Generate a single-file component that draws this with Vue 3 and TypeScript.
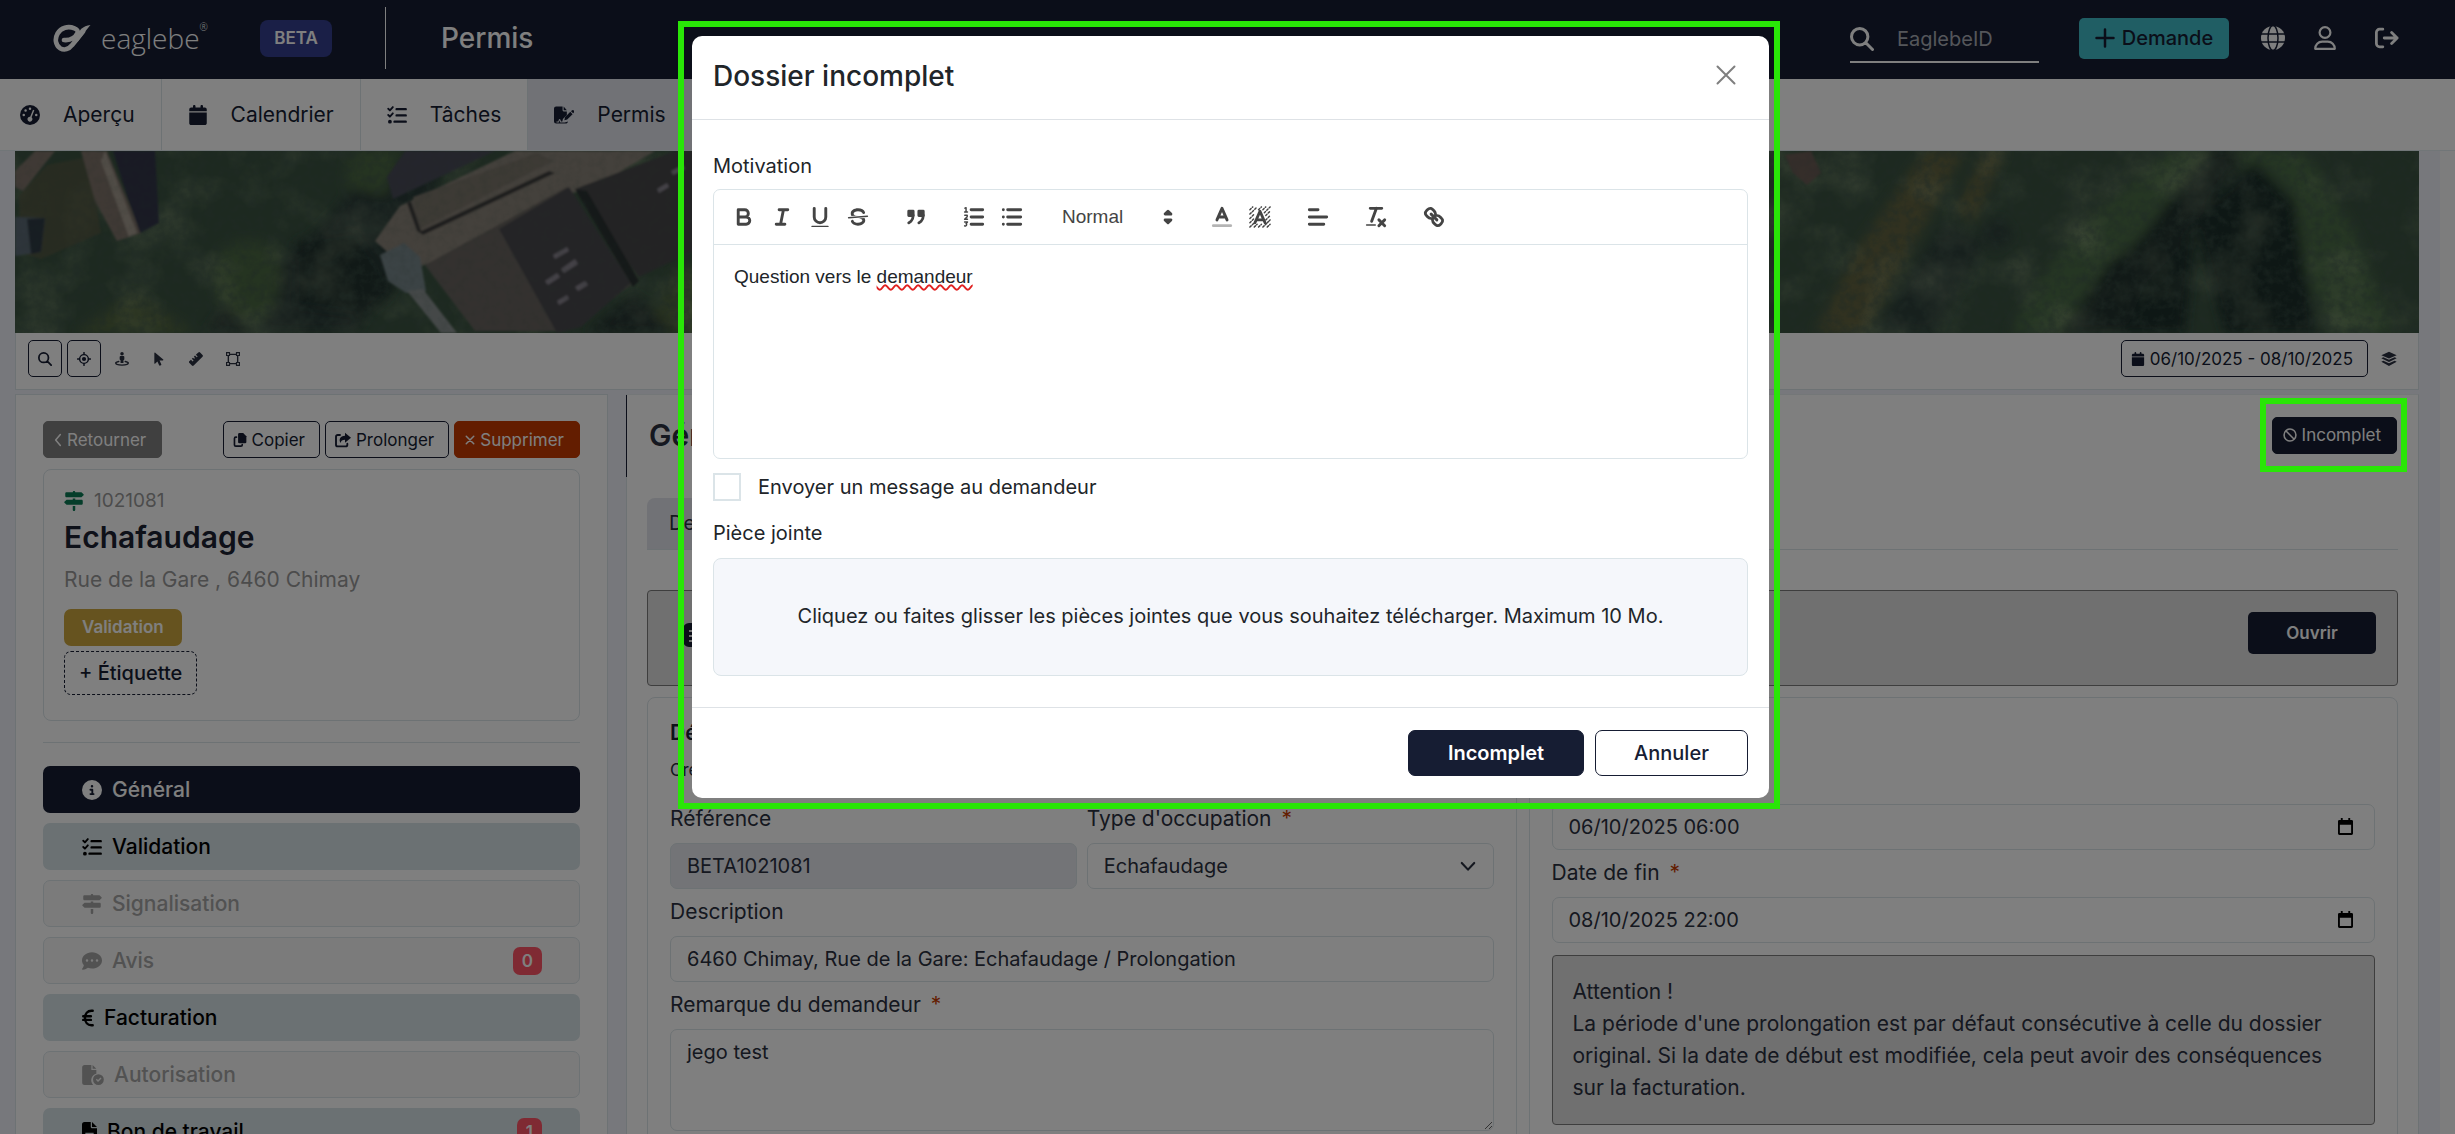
<script setup lang="ts">
import { ref } from 'vue'

interface NavItem { icon: string; label: string; active?: boolean }
interface MenuItem { icon: string; label: string; state: 'current' | 'open' | 'locked'; count?: number }

const nav: NavItem[] = [
  { icon: 'gauge', label: 'Aperçu' },
  { icon: 'calendar', label: 'Calendrier' },
  { icon: 'tasks', label: 'Tâches' },
  { icon: 'sign-file', label: 'Permis', active: true },
]

const menu: MenuItem[] = [
  { icon: 'info', label: 'Général', state: 'current' },
  { icon: 'tasks', label: 'Validation', state: 'open' },
  { icon: 'signpost', label: 'Signalisation', state: 'locked' },
  { icon: 'comment', label: 'Avis', state: 'locked', count: 0 },
  { icon: 'euro', label: 'Facturation', state: 'open' },
  { icon: 'file-check', label: 'Autorisation', state: 'locked' },
  { icon: 'file', label: 'Bon de travail', state: 'open', count: 1 },
]

const mapTools = [
  { icon: 'search', label: 'Rechercher', boxed: true },
  { icon: 'target', label: 'Localiser', boxed: true },
  { icon: 'street', label: 'Vue de rue', boxed: false },
  { icon: 'cursor', label: 'Sélectionner', boxed: false },
  { icon: 'ruler', label: 'Mesurer', boxed: false },
  { icon: 'polygon', label: 'Dessiner', boxed: false },
]

const editorGroups: { icon: string; label: string }[][] = [
  [
    { icon: 'q-bold', label: 'Gras' },
    { icon: 'q-italic', label: 'Italique' },
    { icon: 'q-underline', label: 'Souligné' },
    { icon: 'q-strike', label: 'Barré' },
  ],
  [{ icon: 'q-quote', label: 'Citation' }],
  [
    { icon: 'q-ordered', label: 'Liste numérotée' },
    { icon: 'q-bullet', label: 'Liste à puces' },
  ],
]
const editorGroupsEnd: { icon: string; label: string }[][] = [
  [
    { icon: 'q-color', label: 'Couleur' },
    { icon: 'q-background', label: 'Surlignage' },
  ],
  [{ icon: 'q-align', label: 'Alignement' }],
  [{ icon: 'q-clean', label: 'Effacer la mise en forme' }],
  [{ icon: 'q-link', label: 'Lien' }],
]

const search = ref('')
const reference = ref('BETA1021081')
const occupation = ref('Echafaudage')
const description = ref('6460 Chimay, Rue de la Gare: Echafaudage / Prolongation')
const remark = ref('jego test')
const start = ref('06/10/2025 06:00')
const end = ref('08/10/2025 22:00')
const notify = ref(false)
</script>

<template>
  <svg class="sprite" aria-hidden="true">
    <symbol id="gauge" viewBox="0 0 24 24">
      <path fill-rule="evenodd" fill="currentColor" d="M12 0a12 12 0 1 0 0 24a12 12 0 1 0 0-24zM12 3a1.500 1.500 0 1 1 0 3a1.500 1.500 0 1 1 0-3zM6.700 5.200a1.500 1.500 0 1 1 0 3a1.500 1.500 0 1 1 0-3zM4.500 10.500a1.500 1.500 0 1 1 0 3a1.500 1.500 0 1 1 0-3zM19.500 10.500a1.500 1.500 0 1 1 0 3a1.500 1.500 0 1 1 0-3zM15.600 5.600l1.600.700-3.300 8.400a3 3 0 1 1-1.700-.700z" />
    </symbol>
    <symbol id="calendar" viewBox="0 0 448 512">
      <path fill="currentColor" d="M96 32V64H48C21.500 64 0 85.500 0 112v48H448V112c0-26.500-21.500-48-48-48H352V32c0-17.700-14.300-32-32-32s-32 14.300-32 32V64H160V32c0-17.700-14.300-32-32-32S96 14.300 96 32zM448 192H0V464c0 26.500 21.500 48 48 48H400c26.500 0 48-21.500 48-48V192z" />
    </symbol>
    <symbol id="tasks" viewBox="0 0 24 24">
      <g fill="none" stroke="currentColor" stroke-linecap="round" stroke-linejoin="round">
        <path stroke-width="2.200" d="M1.500 4.500l2 2L7 2.500M1.500 12l2 2L7 10" />
        <path stroke-width="2.800" d="M11.500 5h11M11.500 12.500h11M9 20h13.500" />
      </g>
      <circle cx="3.500" cy="20" r="2.300" fill="currentColor" />
    </symbol>
    <symbol id="sign-file" viewBox="0 0 28 24">
      <path fill="currentColor" d="M3 0h9v5.500A1.500 1.500 0 0 0 13.500 7H18v5l-5.500 5.600-.9 3.400H10l-1-2.500c-.5-1.100-2-1-2.300 0L6 21H3.500v1.400h3.200l1-3 1.100 3H15l4.500-1.200V21a3 3 0 0 1-1.500 2.600c-.4.200-.9.400-1.500.4H3a3 3 0 0 1-3-3V3a3 3 0 0 1 3-3zM13.500 0L18 5.500h-4.500zM22.800 7.600l3.200 3.200-7.500 7.500-4 1 .9-4.100zM23.800 6.600l1-1a2.100 2.100 0 0 1 3 3l-1 1z" />
    </symbol>
    <symbol id="search" viewBox="0 0 24 24">
      <path fill="none" stroke="currentColor" stroke-width="3" stroke-linecap="round" d="M9.700 1.500a8.200 8.200 0 1 0 0 16.400a8.200 8.200 0 1 0 0-16.400M15.800 15.800l6.700 6.700" />
    </symbol>
    <symbol id="plus" viewBox="0 0 20 20">
      <path fill="none" stroke="currentColor" stroke-width="2.500" stroke-linecap="round" d="M10 1.500v17M1.500 10h17" />
    </symbol>
    <symbol id="globe" viewBox="0 0 24 24">
      <circle cx="12" cy="12" r="12" fill="currentColor" />
      <g fill="none" stroke="#161d33" stroke-width="1.500">
        <path d="M0 8h24M0 16h24" />
        <ellipse cx="12" cy="12" rx="5" ry="12.500" />
      </g>
    </symbol>
    <symbol id="user" viewBox="0 0 22 24">
      <g fill="none" stroke="currentColor" stroke-width="2.200" stroke-linejoin="round">
        <circle cx="11" cy="6.500" r="5.400" />
        <path d="M1.200 22.800c0-4 3-7.100 7-7.100h5.600c4 0 7 3.100 7 7.100z" />
      </g>
    </symbol>
    <symbol id="logout" viewBox="0 0 26 22">
      <path fill="none" stroke="currentColor" stroke-width="3" stroke-linecap="round" stroke-linejoin="round" d="M8.500 1.500H5A3.500 3.500 0 0 0 1.500 5v12A3.500 3.500 0 0 0 5 20.500h3.500M10 11h14M18 5l6 6-6 6" />
    </symbol>
    <symbol id="target" viewBox="0 0 24 24">
      <g fill="none" stroke="currentColor" stroke-width="2.500" stroke-linecap="round">
        <circle cx="12" cy="12" r="7.500" />
        <path d="M12 1v3M12 20v3M1 12h3M20 12h3" />
      </g>
      <circle cx="12" cy="12" r="3.600" fill="currentColor" />
    </symbol>
    <symbol id="street" viewBox="0 0 24 24">
      <circle cx="12" cy="3" r="3" fill="currentColor" />
      <path fill="currentColor" d="M9.500 7h5A1.500 1.500 0 0 1 16 8.500V13l-1.500 1v5h-5v-5L8 13V8.500A1.500 1.500 0 0 1 9.500 7z" />
      <path fill="none" stroke="currentColor" stroke-width="2.500" stroke-linecap="round" d="M6.500 16.200C3.500 16.800 1.300 17.800 1.300 19c0 2 4.800 3.500 10.700 3.500S22.700 21 22.700 19c0-1.200-2.200-2.200-5.200-2.800" />
    </symbol>
    <symbol id="cursor" viewBox="0 0 18 24">
      <path fill="currentColor" d="M1 1.800v17.400c0 .9 1 1.300 1.600.7l3.700-3.800 2.900 6.500c.3.700 1.200 1 2 .7l1-.5c.7-.3 1-1.200.7-1.900L10 14.500h5.600c.9 0 1.300-1 .7-1.600L2.600 1.100C2 .5 1 .9 1 1.800z" />
    </symbol>
    <symbol id="ruler" viewBox="0 0 24 24">
      <path fill="currentColor" d="M1 15.500l2.300-2.300 3 3 1.500-1.500-3-3 2-2 2 2 1.500-1.500-2-2 2-2 3 3 1.500-1.500-3-3L14 2.500 16 .8a2.200 2.200 0 0 1 3 0L23.200 5a2.200 2.200 0 0 1 0 3L8 23.200a2.200 2.200 0 0 1-3 0L.8 19a2.200 2.200 0 0 1 .2-3.500z" />
    </symbol>
    <symbol id="polygon" viewBox="0 0 24 24">
      <g fill="none" stroke="currentColor" stroke-width="2.400">
        <path d="M4 4h16v16H4z" />
        <path fill="#fff" stroke-width="2" d="M1 1h5v5H1zM18 1h5v5h-5zM1 18h5v5H1zM18 18h5v5h-5z" />
      </g>
    </symbol>
    <symbol id="layers" viewBox="0 0 24 22">
      <path fill="currentColor" d="M12 0l11.500 5.200L12 10.400.5 5.200zM3.500 8.200L12 12l8.500-3.800 3 1.800L12 15.400.5 10zM3.500 13.600L12 17.500l8.500-3.900 3 1.600L12 21.500.5 15.200z" />
    </symbol>
    <symbol id="chevron-left" viewBox="0 0 10 18">
      <path fill="none" stroke="currentColor" stroke-width="2" stroke-linecap="round" stroke-linejoin="round" d="M8 2L2 9l6 7" />
    </symbol>
    <symbol id="chevron-down" viewBox="0 0 18 12">
      <path fill="none" stroke="currentColor" stroke-width="2.400" stroke-linecap="round" stroke-linejoin="round" d="M2 2l7 7.500L16 2" />
    </symbol>
    <symbol id="copy" viewBox="0 0 20 22">
      <path fill="currentColor" d="M9 0h6l5 5v9a2 2 0 0 1-2 2H9a2 2 0 0 1-2-2V2a2 2 0 0 1 2-2z" />
      <path fill="none" stroke="currentColor" stroke-width="2.600" stroke-linecap="round" stroke-linejoin="round" d="M4.500 6.500H3.300a2 2 0 0 0-2 2v10.200a2 2 0 0 0 2 2h8.200a2 2 0 0 0 2-2v-.5" />
    </symbol>
    <symbol id="share" viewBox="0 0 24 22">
      <path fill="none" stroke="currentColor" stroke-width="2.800" stroke-linecap="round" stroke-linejoin="round" d="M7.500 3.500H4A2.500 2.500 0 0 0 1.500 6v12A2.500 2.500 0 0 0 4 20.500h12a2.500 2.500 0 0 0 2.500-2.500v-1.500" />
      <path fill="currentColor" d="M15 0l9 7.500L15 15v-4.500c-4 0-6 1-6.500 5C5 11 7.500 4.800 15 4.600z" />
    </symbol>
    <symbol id="cross" viewBox="0 0 12 12">
      <path fill="none" stroke="currentColor" stroke-width="1.800" stroke-linecap="round" d="M1.500 1.500l9 9M10.500 1.500l-9 9" />
    </symbol>
    <symbol id="close" viewBox="0 0 20 20">
      <path fill="none" stroke="currentColor" stroke-width="2" stroke-linecap="round" d="M1.500 1.500l17 17M18.500 1.500l-17 17" />
    </symbol>
    <symbol id="signpost" viewBox="0 0 512 512">
      <path fill="currentColor" d="M224 32H64C46.300 32 32 46.300 32 64v64c0 17.700 14.300 32 32 32H441.400c4.200 0 8.300-1.700 11.300-4.700l48-48c6.200-6.200 6.200-16.400 0-22.600l-48-48c-3-3-7.100-4.700-11.300-4.700H288c0-17.700-14.300-32-32-32s-32 14.300-32 32zM480 256c0-17.700-14.300-32-32-32H288V192H224v32H70.600c-4.200 0-8.300 1.700-11.300 4.700l-48 48c-6.200 6.200-6.200 16.400 0 22.600l48 48c3 3 7.100 4.700 11.300 4.700H448c17.700 0 32-14.300 32-32V256zM288 480V384H224v96c0 17.700 14.300 32 32 32s32-14.300 32-32z" />
    </symbol>
    <symbol id="info" viewBox="0 0 512 512">
      <path fill="currentColor" d="M256 512A256 256 0 1 0 256 0a256 256 0 1 0 0 512zM216 336h24V272H216c-13.300 0-24-10.700-24-24s10.700-24 24-24h48c13.300 0 24 10.700 24 24v88h8c13.300 0 24 10.700 24 24s-10.700 24-24 24H216c-13.300 0-24-10.700-24-24s10.700-24 24-24zm40-208a32 32 0 1 1 0 64 32 32 0 1 1 0-64z" />
    </symbol>
    <symbol id="comment" viewBox="0 0 512 512">
      <path fill="currentColor" d="M256 448c141.400 0 256-93.100 256-208S397.400 32 256 32S0 125.100 0 240c0 45.100 17.700 86.800 47.700 120.900c-1.900 24.500-11.400 46.300-21.400 62.900c-5.500 9.200-11.100 16.600-15.200 21.600c-2.100 2.500-3.700 4.400-4.900 5.700c-4.600 4.600-7.500 12.800-5 18.800c2.500 6 8.300 9.900 14.800 9.900c28.700 0 57.600-8.900 81.600-19.300c22.900-10 42.400-21.900 54.300-30.600c31.800 11.500 67 17.900 104.100 17.900zM128 208a32 32 0 1 1 0 64 32 32 0 1 1 0-64zm128 0a32 32 0 1 1 0 64 32 32 0 1 1 0-64zm96 32a32 32 0 1 1 64 0 32 32 0 1 1-64 0z" />
    </symbol>
    <symbol id="euro" viewBox="0 0 14 22">
      <path fill="none" stroke="currentColor" stroke-width="2.800" stroke-linecap="round" d="M12.500 2.500h-1.500C6.500 2.500 3.500 6 3.500 11s3 8.500 7.500 8.500h1.500M1.400 9h9M1.400 13.200h9" />
    </symbol>
    <symbol id="file-check" viewBox="0 0 26 24">
      <path fill="currentColor" d="M3 0h8v6h6v4.500a8 8 0 0 0-4.500 12.700c.2.300.4.500.6.800H3a3 3 0 0 1-3-3V3a3 3 0 0 1 3-3zM12.500 0L17 4.600h-4.500z" />
      <path fill="currentColor" fill-rule="evenodd" d="M19.500 11a6.500 6.500 0 1 0 0 13a6.500 6.500 0 1 0 0-13zM22 15l1.200 1.200-4.200 4.200-2.600-2.600 1.200-1.200 1.400 1.400z" />
    </symbol>
    <symbol id="file" viewBox="0 0 18 24">
      <path fill="currentColor" fill-rule="evenodd" d="M3 0h7.500v6A1.500 1.500 0 0 0 12 7.500h6V21a3 3 0 0 1-3 3H3a3 3 0 0 1-3-3V3a3 3 0 0 1 3-3zM12 0l6 6h-6zM4 13v6h10v-6z" />
    </symbol>
    <symbol id="ban" viewBox="0 0 20 20">
      <path fill="none" stroke="currentColor" stroke-width="2.200" d="M10 1.500a8.500 8.500 0 1 0 0 17a8.500 8.500 0 1 0 0-17M4 4l12 12" />
    </symbol>
    <symbol id="date" viewBox="0 0 16 18">
      <path fill="currentColor" fill-rule="evenodd" d="M3 0h2v2h6V0h2v2h1.500A1.500 1.500 0 0 1 16 3.500v13a1.500 1.500 0 0 1-1.500 1.500h-13A1.500 1.500 0 0 1 0 16.500v-13A1.500 1.500 0 0 1 1.500 2H3zM2 7v9h12V7z" />
    </symbol>
    <symbol id="note" viewBox="0 0 24 24">
      <path fill="currentColor" fill-rule="evenodd" d="M6 0h12a6 6 0 0 1 6 6v12a6 6 0 0 1-6 6H6a6 6 0 0 1-6-6V6a6 6 0 0 1 6-6zM6 7v2h12V7zM6 12v2h8v-2zM6 17v2h12v-2z" />
    </symbol>
    <symbol id="q-bold" viewBox="0 0 18 18">
      <path class="qs" d="M5,4H9.500A2.500,2.500,0,0,1,9.500,9H5ZM5,9h5.500A2.500,2.500,0,0,1,10.500,14H5Z" />
    </symbol>
    <symbol id="q-italic" viewBox="0 0 18 18"><path class="qs" d="M7,4h6M5,14h6M8,14L10,4" /></symbol>
    <symbol id="q-underline" viewBox="0 0 18 18">
      <path class="qs" d="M5,3V9a4,4,0,0,0,8,0V3" />
      <rect fill="currentColor" x="3" y="15" width="12" height="1" rx="0.500" />
    </symbol>
    <symbol id="q-strike" viewBox="0 0 18 18">
      <path class="qt" d="M15.500,8.500L2.500,9.500" />
      <path fill="currentColor" d="M9.007,8C6.542,7.791,6,7.519,6,6.500,6,5.792,7.283,5,9,5c1.571,0,2.765.679,2.969,1.309a1,1,0,0,0,1.900-.617C13.356,4.106,11.354,3,9,3,6.200,3,4,4.538,4,6.500a3.200,3.200,0,0,0,.5,1.843ZM8.984,10C11.457,10.208,12,10.479,12,11.500c0,0.708-1.283,1.500-3,1.500-1.571,0-2.765-.679-2.969-1.309a1,1,0,1,0-1.900.617C4.644,13.894,6.646,15,9,15c2.800,0,5-1.538,5-3.500a3.200,3.200,0,0,0-.5-1.843Z" />
    </symbol>
    <symbol id="q-quote" viewBox="0 0 18 18">
      <path class="qs solid" d="M4,5h3v3H4ZM11,5h3v3h-3Z" />
      <path class="qs" d="M7,8c0,4.031-3,5-3,5M14,8c0,4.031-3,5-3,5" />
    </symbol>
    <symbol id="q-ordered" viewBox="0 0 18 18">
      <path class="qs" d="M7,4h8M7,9h8M7,14h8" />
      <path class="qt" d="M2.500,5.500h2M3.500,5.500v-3L2.700,2.900M2.600,7.800h1.700l0,1L2.500,10.500h2M2.500,12.500h2l-1,1.100a0.900,0.900,0,1,1-1,1.500" />
    </symbol>
    <symbol id="q-bullet" viewBox="0 0 18 18"><path class="qs" d="M6,4h9M6,9h9M6,14h9M3,4h0M3,9h0M3,14h0" /></symbol>
    <symbol id="q-color" viewBox="0 0 18 18">
      <path class="qs" opacity="0.400" d="M3,15h12" />
      <path class="qs" d="M5.500,11L9,3l3.500,8M11.600,9H6.400" />
    </symbol>
    <symbol id="q-background" viewBox="0 0 18 18">
      <path class="qt" stroke-dasharray="1.200 1.200" d="M2,4l2-2M2,7l5-5M2,10l3-3M2,13l3-3M2,16l4-4M8,4l2-2M11,4l2-2M12,6l4-4M13,8l3-3M13,11l3-3M14,13l2-2M5,16l2-2M8,16l2-2M11,16l5-5M14,16l2-2" />
      <path class="qs" d="M5.500,13L9,5l3.500,8M11.600,11H6.400" />
    </symbol>
    <symbol id="q-align" viewBox="0 0 18 18"><path class="qs" d="M3,9h12M3,14h10M3,4h6" /></symbol>
    <symbol id="q-clean" viewBox="0 0 18 18">
      <path class="qs" d="M5,3h8M6,12L9.300,3M11,11l4,4M15,11l-4,4" />
      <rect fill="currentColor" x="2" y="14" width="7" height="1" rx="0.500" />
    </symbol>
    <symbol id="q-link" viewBox="0 0 18 18">
      <path class="qs" d="M7,7l4,4M8.900,4.577a3.476,3.476,0,0,1,.36,4.679A3.476,3.476,0,0,1,4.577,8.900C3.185,7.500,2.035,6.400,4.217,4.217S7.500,3.185,8.900,4.577ZM13.423,9.100a3.476,3.476,0,0,0-4.679-.36,3.476,3.476,0,0,0,.36,4.679c1.392,1.392,2.500,2.542,4.679.36S14.815,10.500,13.423,9.100Z" />
    </symbol>
  </svg>

  <div class="app">
    <header class="top">
      <a class="logo" href="#" aria-label="eaglebe">
        <svg class="mark" viewBox="0 0 38 28">
          <path fill="none" stroke="currentColor" stroke-width="4.600" stroke-linejoin="round" stroke-linecap="round" d="M11 16c6 .5 11-2 13.500-7 .8-2-.5-3.800-3-4.700C15 1.800 8 3.500 4.600 9.500 1.500 15 2.500 21 7 24.200c4.500 2.500 9 1 12-3L30 7.500" />
          <path fill="currentColor" d="M28 5c3-2.500 5.500-3.500 9.500-4-3.500 4-7 9-13 17l-2-4z" />
        </svg>
        <span>eaglebe</span><sup>®</sup>
      </a>
      <span class="beta">BETA</span>
      <h1>Permis</h1>
      <label class="find">
        <svg class="i24"><use href="#search" /></svg>
        <input v-model="search" type="text" placeholder="EaglebeID" aria-label="EaglebeID" />
      </label>
      <button class="ask" type="button"><svg class="i20"><use href="#plus" /></svg>Demande</button>
      <button class="plain" type="button" aria-label="Langue"><svg class="i24"><use href="#globe" /></svg></button>
      <button class="plain" type="button" aria-label="Profil"><svg class="i24"><use href="#user" /></svg></button>
      <button class="plain out" type="button" aria-label="Déconnexion"><svg class="i24"><use href="#logout" /></svg></button>
    </header>

    <nav class="tabs">
      <a v-for="n in nav" :key="n.label" href="#" :class="{ active: n.active }">
        <svg class="i20"><use :href="'#' + n.icon" /></svg>{{ n.label }}
      </a>
    </nav>

    <div class="body">
      <main>
        <svg class="map" viewBox="0 0 2404 182" preserveAspectRatio="xMidYMid slice" role="img" aria-label="Vue aérienne">
          <defs>
            <filter id="grain" x="0" y="0" width="100%" height="100%">
              <feTurbulence type="fractalNoise" baseFrequency="0.120" numOctaves="4" seed="8" />
              <feColorMatrix values="0 0 0 0 0.050  0 0 0 0 0.090  0 0 0 0 0.070  1.800 0 0 0 -0.700" />
            </filter>
            <filter id="light" x="0" y="0" width="100%" height="100%">
              <feTurbulence type="fractalNoise" baseFrequency="0.020" numOctaves="5" seed="3" />
              <feColorMatrix values="0 0 0 0 0.420  0 0 0 0 0.500  0 0 0 0 0.300  0 1.800 0 0 -0.800" />
            </filter>
            <filter id="soft"><feGaussianBlur stdDeviation="6" /></filter>
            <filter id="edge"><feGaussianBlur stdDeviation="0.800" /></filter>
          </defs>
          <rect width="2404" height="182" fill="#3b5341" />
          <g filter="url(#soft)">
            <path fill="#2a3a38" d="M250 182C230 120 300 90 320 60L370 0h60l-20 70-20 50-30 30-20 32z" />
            <path fill="#20302f" d="M280 90l60-10 40 60-30 25-70-10z" />
            <path fill="#4c6842" d="M205 100c30-20 60-10 60 20s-10 50-30 50-50-30-30-70zM335 0h55l-20 45-40-10z" />
            <path fill="#52663f" d="M60 182l60-40 60 40zM630 182l30-60 60-20v80z" />
            <path fill="#263633" d="M190 182l20-30 30 30zM570 182l50-40 40 40z" />
            <path fill="#626440" d="M1800 182l40-80 70-102h40l-50 90-50 92zM1940 60l30-60h20l-30 70z" />
            <path fill="#2e403a" d="M1860 182l30-50 40-60 40 20-50 90zM1965 80l20-15 15 20-20 15z" />
            <path fill="#22322f" d="M1990 182l110-130 60-52h70l-60 90-60 92z" />
            <path fill="#4c6c46" d="M1995 182c40-80 80-120 160-182h40c-50 50-60 90-100 110l-50 72zM2220 0h70l50 80 40 102h-60l-30-60z" />
            <path fill="#1e2d2c" d="M2180 70l60-60 40 40 20 132h-90zM2110 182l20-50 50-50-10 100z" />
          </g>
          <rect width="2404" height="182" filter="url(#light)" opacity="0.400" />
          <rect width="2404" height="182" filter="url(#grain)" opacity="0.550" />
          <g filter="url(#edge)">
            <path fill="#5a5a44" d="M4 45L32 14l42-8 12 76-60 26-20-6z" opacity="0.700" />
            <path fill="#7f736a" d="M20 0h20l-32 40-8-4v-16zM66 0h26l34 82-24 8-22-40z" />
            <path fill="#a39a8e" d="M90 0l4 10 28 72-8 4L86 10z" />
            <path fill="#303648" d="M98 0h42l4 72-19 10-12-34z" />
            <path fill="#5c6a76" d="M0 66l30 1-4 34-26 4z" />
            <path fill="#2e3a45" d="M12 68l18-1-4 34-10 2z" />
            <path fill="#898278" d="M385 55L500 0h140l-64 38-20 4-52 34-110 44-34-30z" />
            <path fill="#484b58" d="M390 0h90L378 48l-6-22z" />
            <path fill="#7a746b" d="M398 46l124-44 16 8-136 70z" />
            <path fill="#3a3a3a" d="M396 50l10 30L534 20l6 2-132 62-6-4-10-28z" />
            <path fill="#68645f" d="M410 114l142-78 64 98-66 46h-90z" />
            <path fill="#4a494d" d="M484 78l70-42 62 96-50 44-24 6z" />
            <path fill="#464648" d="M560 38L660 0h60v80l-96 46z" />
            <path fill="#293030" d="M560 38l12 2 52 90-6 6z" />
            <path fill="#77868a" d="M365 104l24-12 16 14 6 34-20 2-18-12z" />
            <path fill="#8a9191" d="M392 140l16-2 34 44h-16z" />
            <path fill="#8a8590" d="M538 104l14-8 2 4-14 8zM546 118l14-10 3 5-14 9zM530 130l12-8 3 4-12 8zM560 136l10-6 3 4-10 6zM542 150l10-6 2 4-10 6zM642 38l10-6 2 4-10 6zM656 20l12-6 2 4-12 6z" />
            <path fill="#6a5b54" d="M1770 4l26-4 10 22-14 12-14-12z" />
          </g>
          <rect width="2404" height="182" filter="url(#grain)" opacity="0.150" />
        </svg>

        <div class="maptools">
          <button v-for="t in mapTools" :key="t.icon" type="button" :class="{ boxed: t.boxed }" :aria-label="t.label">
            <svg class="i14"><use :href="'#' + t.icon" /></svg>
          </button>
          <button class="small period" type="button"><svg class="i14"><use href="#calendar" /></svg>06/10/2025 - 08/10/2025</button>
          <button type="button" aria-label="Couches"><svg class="i16"><use href="#layers" /></svg></button>
        </div>

        <div class="cols">
          <aside>
            <div class="actions">
              <button class="small grey" type="button"><svg class="i14 thin"><use href="#chevron-left" /></svg>Retourner</button>
              <button class="small push" type="button"><svg class="i14"><use href="#copy" /></svg>Copier</button>
              <button class="small" type="button"><svg class="i16"><use href="#share" /></svg>Prolonger</button>
              <button class="small red" type="button"><svg class="i10"><use href="#cross" /></svg>Supprimer</button>
            </div>
            <section class="card summary">
              <p class="num"><svg class="i20"><use href="#signpost" /></svg>1021081</p>
              <h2>Echafaudage</h2>
              <p class="addr">Rue de la Gare , 6460 Chimay</p>
              <span class="status">Validation</span>
              <button class="tag" type="button">+ Étiquette</button>
            </section>
            <hr />
            <ul class="menu">
              <li v-for="m in menu" :key="m.label">
                <button type="button" :class="m.state" :disabled="m.state === 'locked'">
                  <svg class="i20" :class="m.icon"><use :href="'#' + m.icon" /></svg>{{ m.label }}
                  <span v-if="m.count !== undefined" class="count">{{ m.count }}</span>
                </button>
              </li>
            </ul>
          </aside>

          <article>
            <div class="head">
              <h2>Général</h2>
              <button class="small navy" type="button"><svg class="i14"><use href="#ban" /></svg>Incomplet</button>
            </div>
            <div class="subtabs"><a href="#">Demande</a></div>
            <div class="alert banner">
              <svg class="i24"><use href="#note" /></svg>
              <button class="navy open" type="button">Ouvrir</button>
            </div>
            <div class="pair">
              <section class="card form">
                <h3>Détails</h3>
                <p class="made">Créé</p>
                <div class="two">
                  <div class="field">
                    <label for="ref">Référence</label>
                    <input id="ref" v-model="reference" type="text" disabled />
                  </div>
                  <div class="field">
                    <label for="occ">Type d'occupation <b>*</b></label>
                    <div class="box">
                      <select id="occ" v-model="occupation"><option>Echafaudage</option></select>
                      <svg class="arrow"><use href="#chevron-down" /></svg>
                    </div>
                  </div>
                </div>
                <div class="field">
                  <label for="desc">Description</label>
                  <input id="desc" v-model="description" type="text" />
                </div>
                <div class="field">
                  <label for="rem">Remarque du demandeur <b>*</b></label>
                  <textarea id="rem" v-model="remark"></textarea>
                </div>
              </section>
              <section class="card form dates">
                <div class="field">
                  <label for="from">Date de début <b>*</b></label>
                  <div class="box">
                    <input id="from" v-model="start" type="text" />
                    <svg class="cal"><use href="#date" /></svg>
                  </div>
                </div>
                <div class="field">
                  <label for="to">Date de fin <b>*</b></label>
                  <div class="box">
                    <input id="to" v-model="end" type="text" />
                    <svg class="cal"><use href="#date" /></svg>
                  </div>
                </div>
                <div class="alert warn">
                  <p>Attention !</p>
                  <p>La période d'une prolongation est par défaut consécutive à celle du dossier original. Si la date de début est modifiée, cela peut avoir des conséquences sur la facturation.</p>
                </div>
              </section>
            </div>
          </article>
        </div>
      </main>
      <div class="track"></div>
    </div>

    <div class="overlay">
      <div class="modal" role="dialog" aria-labelledby="dlg">
        <div class="mhead">
          <h2 id="dlg">Dossier incomplet</h2>
          <button class="close" type="button" aria-label="Fermer"><svg class="i20"><use href="#close" /></svg></button>
        </div>
        <div class="mbody">
          <p class="lab">Motivation</p>
          <div class="editor">
            <div class="bar">
              <div v-for="(g, i) in editorGroups" :key="i" class="grp">
                <button v-for="b in g" :key="b.icon" type="button" :aria-label="b.label"><svg><use :href="'#' + b.icon" /></svg></button>
              </div>
              <button class="picker" type="button">
                Normal
                <svg viewBox="0 0 18 18"><path d="M7 11l2 2 2-2zM7 7l2-2 2 2z" /></svg>
              </button>
              <div v-for="(g, i) in editorGroupsEnd" :key="i" class="grp">
                <button v-for="b in g" :key="b.icon" type="button" :aria-label="b.label"><svg><use :href="'#' + b.icon" /></svg></button>
              </div>
            </div>
            <div class="text" contenteditable="true" spellcheck="false" role="textbox" aria-label="Motivation">Question vers le <u>demandeur</u></div>
          </div>
          <label class="check"><input v-model="notify" type="checkbox" />Envoyer un message au demandeur</label>
          <p class="lab">Pièce jointe</p>
          <button class="drop" type="button">Cliquez ou faites glisser les pièces jointes que vous souhaitez télécharger. Maximum 10 Mo.</button>
        </div>
        <div class="mfoot">
          <button class="navy" type="button">Incomplet</button>
          <button class="line" type="button">Annuler</button>
        </div>
      </div>
    </div>
    <div class="ring"></div>
  </div>
</template>

<style>
body {
  margin: 0;
  overflow: hidden;
}
.qs,
.qt {
  fill: none;
  stroke: currentColor;
  stroke-linecap: round;
  stroke-linejoin: round;
  stroke-width: 2px;
}
.qs.solid {
  fill: currentColor;
}
.qt {
  stroke-width: 1px;
}
</style>

<style scoped>
.sprite {
  position: absolute;
  width: 0;
  height: 0;
}
.app {
  position: relative;
  display: flex;
  flex-direction: column;
  height: 100vh;
  overflow: hidden;
  color: #2b3040;
  background: #eef1f8;
  font-family: Inter, "Noto Sans", sans-serif;
  font-size: 20px;
}
*,
*::before,
*::after {
  box-sizing: border-box;
}
p,
h1,
h2,
h3,
ul {
  margin: 0;
  padding: 0;
}
button,
input,
select,
textarea {
  margin: 0;
  font: inherit;
  color: inherit;
}
button {
  display: inline-flex;
  align-items: center;
  border: 0;
  background: none;
}
a {
  color: inherit;
  text-decoration: none;
}
svg {
  flex: none;
}
.i24 { width: 24px; height: 24px; }
.i20 { width: 20px; height: 20px; }
.i16 { width: 16px; height: 16px; }
.i14 { width: 14px; height: 14px; }
.i10 { width: 10px; height: 10px; }

/* top bar */
.top {
  display: flex;
  flex: none;
  align-items: center;
  height: 79px;
  padding: 0 56px 3px 53px;
  color: #fff;
  background: #161d33;
}
.logo {
  display: flex;
  align-items: center;
  width: 207px;
  font-family: "Open Sans", sans-serif;
  font-size: 28px;
  font-weight: 300;
}
.mark {
  width: 38px;
  height: 28px;
  margin-right: 10px;
}
.logo sup {
  align-self: flex-start;
  font-size: 10px;
  line-height: 16px;
}
.beta {
  width: 72px;
  border-radius: 8px;
  background: #343e8e;
  font-size: 17px;
  font-weight: 600;
  line-height: 37px;
  text-align: center;
}
h1 {
  margin-left: 53px;
  padding-left: 55px;
  border-left: 1px solid #fff;
  font-size: 28px;
  font-weight: 500;
  line-height: 62px;
}
.find {
  display: flex;
  align-items: center;
  width: 189px;
  height: 46px;
  margin-top: 3px;
  margin-left: auto;
  border-bottom: 2px solid #fff;
}
.find input {
  width: 140px;
  margin-left: 21px;
  border: 0;
  background: none;
}
.find input::placeholder {
  color: #a9acb5;
}
.ask {
  gap: 7px;
  justify-content: center;
  width: 150px;
  height: 41px;
  margin: 0 32px 0 40px;
  padding: 0;
  border-radius: 5px;
  color: #161d33;
  background: #40bcc8;
  font-weight: 500;
}
.plain {
  margin-right: 28px;
  padding: 0;
}
.plain.out {
  margin: 0 0 0 10px;
}

/* section navigation */
.tabs {
  display: flex;
  flex: none;
  height: 72px;
  border-bottom: 1px solid #e3edf0;
  background: #fff;
}
.tabs a {
  display: flex;
  gap: 23px;
  align-items: center;
  padding: 0 26px;
  border-right: 1px solid #dbe4e8;
  color: #161d33;
  font-size: 21px;
}
.tabs a:first-child {
  padding-left: 20px;
}
.tabs a.active {
  background: #e2e5ec;
}

.body {
  display: flex;
  flex: 1;
  min-height: 0;
}
.track {
  flex: none;
  width: 15px;
  background: #fbfbfb;
}
main {
  flex: 1;
  min-width: 0;
  padding: 0 21px 0 15px;
}
.map {
  display: block;
  width: 100%;
  height: 182px;
}
.maptools {
  display: flex;
  gap: 5px;
  align-items: flex-start;
  height: 57px;
  padding: 7px 13px 0 12px;
  border: 1px solid #dbe4e8;
  border-top: 0;
  background: #fff;
}
.maptools button {
  flex: none;
  justify-content: center;
  width: 32px;
  height: 37px;
  padding: 0;
}
.maptools button.boxed {
  width: 34px;
}
.maptools .boxed,
.small {
  border: 1px solid #161d33;
  border-radius: 5px;
  color: #161d33;
}
.small {
  gap: 5px;
  height: 37px;
  padding: 0 14px 0 9px;
  font-size: 17px;
  white-space: nowrap;
}
.maptools button.period {
  width: auto;
  margin-left: auto;
  padding: 0 14px 0 9px;
}

.cols {
  display: flex;
  gap: 18px;
  align-items: stretch;
  margin-top: 4px;
}
aside,
article {
  min-height: 900px;
  border: 1px solid #dbe4e8;
  background: #fff;
}
aside {
  flex: none;
  width: 593px;
  padding: 26px 27px 0;
}
article {
  flex: 1;
  min-width: 0;
  border-top-color: #e8eef0;
}
.actions {
  display: flex;
  gap: 5px;
}
.push {
  margin-left: auto;
}
.thin {
  width: 8px;
}
.small.grey,
.small.red,
.small.navy {
  padding: 0 15px 0 10px;
  color: #fff;
}
.small.grey {
  border-color: #808080;
  background: #808080;
}
.small.red {
  border-color: #c73a00;
  background: #c73a00;
}
.card {
  border: 1px solid #dbe4e8;
  border-radius: 8px;
}
.summary {
  display: flex;
  flex-direction: column;
  align-items: flex-start;
  margin-top: 11px;
  padding: 16px 20px 25px;
}
.num {
  display: flex;
  gap: 10px;
  align-items: center;
  color: #999;
  font-size: 19px;
  line-height: 30px;
}
.num svg {
  color: #0a7b55;
}
.summary h2 {
  color: #1c2233;
  font-size: 30px;
  font-weight: 600;
  line-height: 42px;
}
.addr {
  margin-top: 8px;
  color: #999;
  font-size: 21px;
  line-height: 28px;
}
.status {
  margin-top: 15px;
  padding: 0 18px;
  border-radius: 7px;
  color: #fff;
  background: #cca73f;
  font-size: 17px;
  font-weight: 600;
  line-height: 37px;
}
.tag {
  height: 44px;
  margin-top: 5px;
  padding: 0 14px;
  border: 1px dashed #161d33;
  border-radius: 7px;
  color: #161d33;
  font-weight: 500;
}
hr {
  margin: 21px 0 23px;
  border: 0;
  border-top: 1px solid #dbe4e8;
}
.menu {
  display: flex;
  flex-direction: column;
  gap: 10px;
  list-style: none;
}
.menu button {
  gap: 10px;
  width: 100%;
  height: 47px;
  padding: 0 37px 0 38px;
  border: 1px solid transparent;
  border-radius: 7px;
  font-size: 21px;
  font-weight: 500;
}
.menu .current {
  color: #fff;
  background: #161d33;
}
.menu .open {
  color: #000;
  background: #d6e2e6;
}
.menu .locked {
  border-color: #dbe4e8;
  color: #a4a4a4;
  background: #f7f7f7;
}
.menu .euro {
  width: 12px;
}
.menu .file {
  width: 15px;
}
.menu .file-check {
  width: 22px;
}
.count {
  min-width: 25px;
  margin-left: auto;
  padding: 0 9px;
  border-radius: 7px;
  color: #fff;
  background: #ff5566;
  font-size: 17px;
  font-weight: 600;
  line-height: 28px;
}

/* detail panel */
.head {
  display: flex;
  align-items: center;
  justify-content: space-between;
  height: 82px;
  margin-left: -1px;
  padding: 0 21px 2px 22px;
  border-left: 1px solid #161d33;
}
.head h2 {
  font-size: 30px;
  font-weight: 600;
}
.navy {
  justify-content: center;
  border-color: #161d33;
  border-radius: 5px;
  color: #fff;
  background: #161d33;
}
.subtabs {
  display: flex;
  margin: 21px 20px 0;
  border-bottom: 1px solid #dbe4e8;
}
.subtabs a {
  padding: 0 22px;
  border-radius: 8px 8px 0 0;
  background: #e2e5ec;
  line-height: 51px;
}
.alert {
  border: 1px solid #7d7d7d;
  border-radius: 4px;
  background: #e1e1e1;
}
.banner {
  display: flex;
  align-items: center;
  justify-content: space-between;
  height: 96px;
  margin: 40px 20px 0;
  padding: 0 21px 10px 35px;
}
.banner > svg {
  margin-top: 4px;
  color: #161d33;
}
.open.navy {
  width: 128px;
  height: 42px;
  font-size: 17px;
  font-weight: 600;
}
.pair {
  display: flex;
  gap: 12px;
  margin: 11px 20px 0;
}
.form {
  display: flex;
  flex: 1;
  flex-direction: column;
  gap: 9px;
  min-width: 0;
  padding: 20px 22px;
}
.form h3 {
  color: #1c2233;
  font-size: 21px;
  font-weight: 600;
  line-height: 30px;
}
.made {
  margin-bottom: 13px;
  font-size: 17px;
  line-height: 26px;
}
.two {
  display: flex;
  gap: 10px;
}
.field {
  display: flex;
  flex: 1;
  flex-direction: column;
  gap: 10px;
  min-width: 0;
}
.field label {
  font-size: 21px;
  line-height: 28px;
}
.field b {
  margin-left: 4px;
  color: #c73a00;
  font-weight: 400;
}
.field input,
.field select,
.field textarea {
  width: 100%;
  height: 46px;
  padding: 0 16px;
  border: 1px solid #dbe4e8;
  border-radius: 7px;
  background: #fff;
  appearance: none;
}
.field input:disabled {
  color: #2b3040;
  background: #e6e9ef;
}
.field textarea {
  display: block;
  height: 102px;
  padding: 8px 16px;
  line-height: 28px;
}
.box {
  position: relative;
}
.box svg {
  position: absolute;
  pointer-events: none;
}
.box .arrow {
  top: 18px;
  right: 18px;
  width: 16px;
  height: 11px;
}
.box .cal {
  top: 14px;
  right: 22px;
  width: 15px;
  height: 17px;
  color: #000;
}
.dates {
  padding-top: 68px;
}
.dates .field {
  flex: none;
}
.warn {
  margin-top: 3px;
  padding: 20px 32px 20px 20px;
  font-size: 21px;
  line-height: 32px;
}

/* dialog */
.overlay {
  position: absolute;
  inset: 0;
  display: flex;
  align-items: flex-start;
  justify-content: center;
  padding: 36px 0 0 6px;
  background: rgba(0, 0, 0, 0.5);
}
.modal {
  position: relative;
  width: 1077px;
  max-width: 100%;
  border-radius: 10px;
  color: #212529;
  background: #fff;
}
.modal::after {
  position: absolute;
  inset: -15px -11px -11px -14px;
  border: 6px solid #29e607;
  content: "";
  pointer-events: none;
}
.mhead {
  display: flex;
  align-items: center;
  justify-content: space-between;
  height: 84px;
  padding: 0 33px 3px 21px;
  border-bottom: 1px solid #dee2e6;
}
.mhead h2 {
  font-size: 28px;
  font-weight: 500;
}
.close {
  padding: 0 0 3px;
  color: #7f7f7f;
}
.mbody {
  padding: 32px 21px 31px;
}
.lab {
  line-height: 28px;
}
.editor {
  margin-top: 9px;
  border: 1px solid #dbe4e8;
  border-radius: 7px;
  font-family: "Liberation Sans", sans-serif;
  font-size: 19px;
}
.bar {
  display: flex;
  gap: 20px;
  align-items: center;
  height: 55px;
  padding: 0 11px;
  border-bottom: 1px solid #dbe4e8;
  color: #444;
}
.grp {
  display: flex;
}
.grp button {
  padding: 6px;
}
.bar svg {
  width: 26px;
  height: 26px;
}
.picker {
  justify-content: space-between;
  width: 132px;
  padding: 0 2px 0 11px;
}
.picker path {
  fill: #444;
  stroke: #444;
  stroke-linejoin: round;
  stroke-width: 2px;
}
.text {
  height: 213px;
  padding: 18px 20px;
  line-height: 28px;
}
.text u {
  text-decoration: underline wavy #e02020 2px;
}
.check {
  display: flex;
  gap: 17px;
  align-items: center;
  margin: 14px 0 18px;
  line-height: 28px;
}
.check input {
  width: 28px;
  height: 28px;
  border: 2px solid #dbe4e8;
  appearance: none;
}
.drop {
  justify-content: center;
  width: 100%;
  height: 118px;
  margin-top: 11px;
  padding-bottom: 3px;
  border: 1px solid #dbe4e8;
  border-radius: 8px;
  background: #f5f7fb;
}
.mfoot {
  display: flex;
  gap: 11px;
  justify-content: flex-end;
  padding: 22px 21px;
  border-top: 1px solid #dee2e6;
}
.mfoot button {
  justify-content: center;
  width: 153px;
  height: 46px;
  border: 1px solid #161d33;
  border-radius: 7px;
  color: #161d33;
  font-weight: 500;
}
.mfoot .navy {
  width: 176px;
  color: #fff;
  font-weight: 600;
}

/* attention frame drawn above the dimmed page */
.ring {
  position: absolute;
  top: 398px;
  right: 48px;
  width: 147px;
  height: 74px;
  border: 6px solid #29e607;
}
</style>
